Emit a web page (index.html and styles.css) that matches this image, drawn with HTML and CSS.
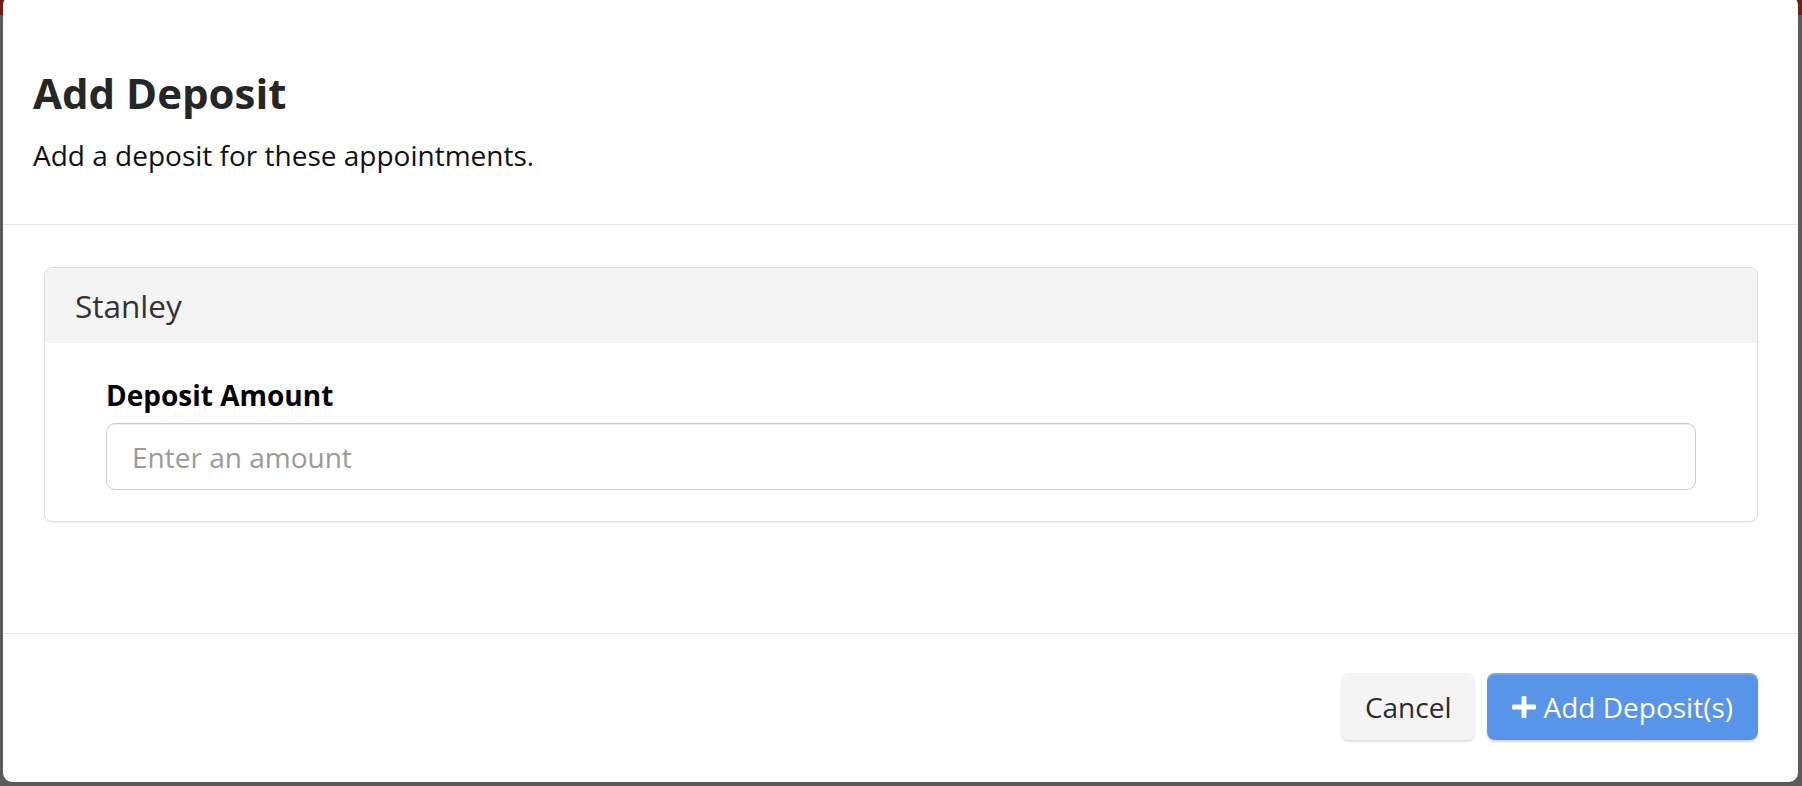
FILE: index.html
```html
<!DOCTYPE html>
<html>
<head>
<meta charset="utf-8">
<title>Add Deposit</title>
<link rel="stylesheet" href="styles.css">
</head>
<body>
<div class="modal">
  <div class="modal-header">
    <h2 class="modal-title">Add Deposit</h2>
    <p class="modal-subtitle">Add a deposit for these appointments.</p>
  </div>
  <div class="modal-body">
    <div class="card">
      <div class="card-header">Stanley</div>
      <div class="card-body">
        <label class="field-label" for="amount">Deposit Amount</label>
        <input class="field-input" id="amount" type="text" placeholder="Enter an amount">
      </div>
    </div>
  </div>
  <div class="modal-footer">
    <button class="btn btn-cancel" type="button">Cancel</button>
    <button class="btn btn-primary" type="button">
      <svg class="btn-icon" width="24" height="22" viewBox="0 0 24 22" aria-hidden="true">
        <rect x="9.5" y="0" width="5" height="22" rx="1.2" fill="#fff"/>
        <rect x="0" y="8.5" width="24" height="5" rx="1.2" fill="#fff"/>
      </svg>
      <span>Add Deposit(s)</span>
    </button>
  </div>
</div>
</body>
</html>
```

FILE: styles.css
```css
html, body {
  margin: 0;
  padding: 0;
}

body {
  width: 1802px;
  height: 786px;
  overflow: hidden;
  background: linear-gradient(to bottom, #6e1d19 0, #6e1d19 15px, #5a5a5a 15px, #5a5a5a 100%);
  font-family: "Open Sans", "Noto Sans", sans-serif;
  color: #111;
}

.modal {
  margin: -4px 4px 0 3px;
  background: #fff;
  border-radius: 9px;
  overflow: hidden;
}

.modal-header {
  padding: 76px 30px 52px 30px;
  border-bottom: 1px solid #e6e6e6;
}

.modal-title {
  margin: 0;
  font-size: 42px;
  line-height: 41px;
  font-weight: 700;
  color: #262626;
}

.modal-subtitle {
  margin: 25px 0 0 0;
  font-size: 28px;
  line-height: 34px;
  color: #111;
}

.modal-body {
  padding: 42px 40px 111px 41px;
}

.card {
  border: 1px solid #dcdcdc;
  border-radius: 8px;
  overflow: hidden;
  box-shadow: 0 1px 2px rgba(0, 0, 0, 0.06);
}

.card-header {
  height: 75px;
  display: flex;
  align-items: center;
  padding: 0 30px;
  background: #f4f4f4;
  font-size: 31.5px;
  color: #333;
}

.card-body {
  padding: 35px 61px 31px 61px;
  display: flex;
  flex-direction: column;
}

.field-label {
  font-size: 28px;
  line-height: 34px;
  font-weight: 700;
  color: #000;
}

.field-input {
  margin-top: 11px;
  height: 67px;
  box-sizing: border-box;
  border: 1.5px solid #cccccc;
  border-radius: 9px;
  padding: 0 25px;
  font-family: "Open Sans", "Noto Sans", sans-serif;
  font-size: 28px;
  color: #333;
  background: #fff;
  box-shadow: inset 0 1px 1px rgba(0, 0, 0, 0.075);
  outline: none;
}

.field-input::placeholder {
  color: #9a9a9a;
}

.modal-footer {
  border-top: 1px solid #e6e6e6;
  padding: 39px 40px 42px 35px;
  display: flex;
  justify-content: flex-end;
  gap: 12px;
}

.btn {
  height: 67px;
  box-sizing: border-box;
  border: none;
  border-radius: 8px;
  font-family: "Open Sans", "Noto Sans", sans-serif;
  font-size: 28px;
  display: flex;
  align-items: center;
  cursor: pointer;
}

.btn-cancel {
  padding: 0 24px;
  background: #f4f4f4;
  color: #2b2b2b;
  box-shadow: 0 2px 2px rgba(0, 0, 0, 0.12);
}

.btn-primary {
  padding: 0 25px 0 25px;
  gap: 7px;
  background: #5894e8;
  color: #fff;
  box-shadow: inset 0 2px 0 rgba(255, 255, 255, 0.18), 0 2px 2px rgba(0, 0, 0, 0.16);
}

.btn-icon {
  display: block;
  flex: none;
}
```
